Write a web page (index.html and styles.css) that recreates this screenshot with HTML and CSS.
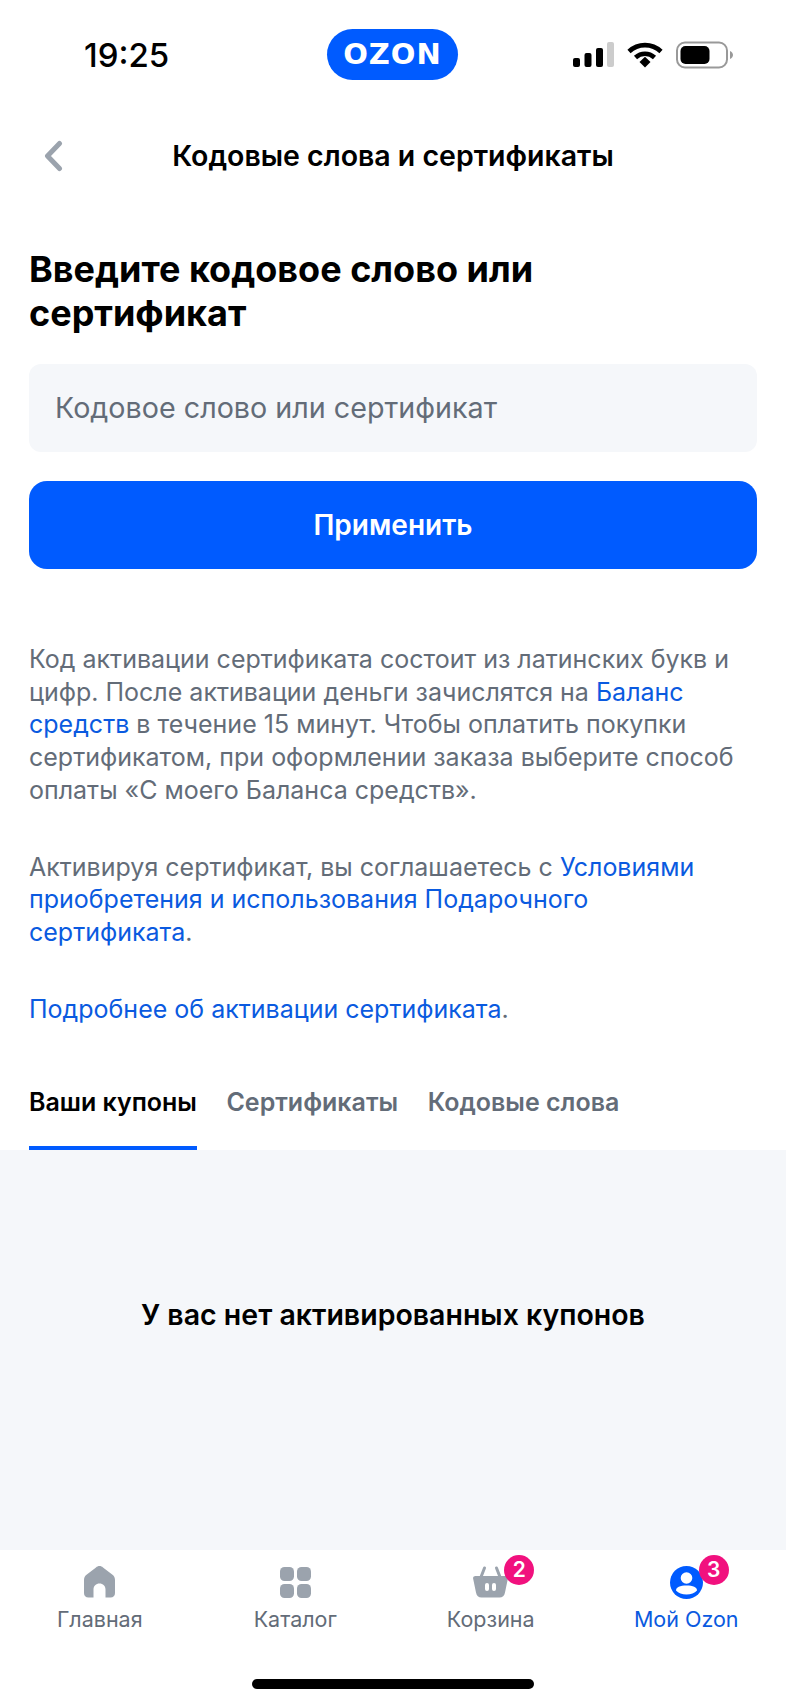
FILE: index.html
```html
<!DOCTYPE html>
<html lang="ru">
<head>
  <meta charset="utf-8">
  <title>Кодовые слова и сертификаты</title>
  <link rel="stylesheet" href="styles.css">
</head>
<body>
  <div class="screen">
    <!-- Status bar -->
    <div class="status">
      <span class="time">19:25</span>
      <span class="logo">OZON</span>
      <div class="status-icons">
        <svg class="signal" width="41" height="26" viewBox="0 0 41 26">
          <rect x="0" y="16" width="7" height="9" rx="2" fill="#000"/>
          <rect x="11.500" y="11" width="7" height="14" rx="2" fill="#000"/>
          <rect x="23" y="6" width="7" height="19" rx="2" fill="#000"/>
          <rect x="34" y="0" width="7" height="25" rx="2" fill="#ccc"/>
        </svg>
        <svg class="wifi" width="36" height="26" viewBox="0 0 36 26">
          <path d="M2 9.500C11 1 25 1 34 9.500" fill="none" stroke="#000" stroke-width="4.600"/>
          <path d="M8.500 15.500C14 10.500 22 10.500 27.500 15.500" fill="none" stroke="#000" stroke-width="4.600"/>
          <path d="M12.500 20L18 14.800L23.500 20L18 25.500Z" fill="#000"/>
        </svg>
        <svg class="battery" width="58" height="28" viewBox="0 0 58 28">
          <rect x="1" y="1.500" width="50" height="25" rx="8" fill="none" stroke="#999" stroke-width="2"/>
          <rect x="4.500" y="5" width="29" height="18" rx="5" fill="#000"/>
          <path d="M54 10C56 11 57 12.500 57 14C57 15.500 56 17 54 18Z" fill="#999"/>
        </svg>
      </div>
    </div>

    <!-- Title -->
    <div class="nav">
      <svg class="back" width="22" height="32" viewBox="0 0 22 32">
        <path d="M17.500 3.500L5.500 16L17.500 28.500" fill="none" stroke="#9ba3ad" stroke-width="5" stroke-linecap="round" stroke-linejoin="round"/>
      </svg>
      <span class="nav-title">Кодовые слова и сертификаты</span>
    </div>

    <div class="content">
      <h1>Введите кодовое слово или сертификат</h1>
      <div class="field">Кодовое слово или сертификат</div>
      <button class="apply">Применить</button>

      <p class="first">Код активации сертификата состоит из латинских букв и цифр. После активации деньги зачислятся на <a>Баланс средств</a> в течение 15 минут. Чтобы оплатить покупки сертификатом, при оформлении заказа выберите способ оплаты «С моего Баланса средств».</p>
      <p>Активируя сертификат, вы соглашаетесь с <a>Условиями приобретения и использования Подарочного сертификата</a>.</p>
      <p><a>Подробнее об активации сертификата</a>.</p>
    </div>

    <div class="tabs">
      <span class="tab active">Ваши купоны</span>
      <span class="tab">Сертификаты</span>
      <span class="tab">Кодовые слова</span>
    </div>

    <div class="panel">У вас нет активированных купонов</div>

    <!-- Bottom navigation -->
    <div class="tabbar">
      <div class="tabbar-items">
        <div class="item">
          <svg width="31" height="33" viewBox="0 0 31 33">
            <path d="M15.500 0C16.800 0 18 .600 19 1.400L28.500 8.800C30.200 10.200 31 11.800 31 14V27C31 29.800 29.300 31.500 26.500 31.500H21.500V23.500C21.500 20 19 17.500 15.500 17.500C12 17.500 9.500 20 9.500 23.500V31.500H4.500C1.700 31.500 0 29.800 0 27V14C0 11.800 .800 10.200 2.500 8.800L12 1.400C13 .600 14.200 0 15.500 0Z" fill="#9ba3ad"/>
          </svg>
          <span>Главная</span>
        </div>
        <div class="item">
          <svg width="31" height="33" viewBox="0 0 31 33">
            <rect x="0" y="1" width="14" height="14" rx="4.500" fill="#9ba3ad"/>
            <rect x="17" y="1" width="14" height="14" rx="4.500" fill="#9ba3ad"/>
            <rect x="0" y="18" width="14" height="14" rx="4.500" fill="#9ba3ad"/>
            <rect x="17" y="18" width="14" height="14" rx="4.500" fill="#9ba3ad"/>
          </svg>
          <span>Каталог</span>
        </div>
        <div class="item">
          <div class="icon-wrap">
            <svg width="35" height="33" viewBox="0 0 35 33">
              <path d="M8 11L11.500 2M27 11L23.500 2" fill="none" stroke="#9ba3ad" stroke-width="3" stroke-linecap="round"/>
              <path d="M2.500 10H32.500C34 10 35.200 11 34.900 12.500L32 26.500C31.400 29.700 29.500 31.500 26.500 31.500H8.500C5.500 31.500 3.600 29.700 3 26.500L.100 12.500C-.200 11 1 10 2.500 10Z" fill="#9ba3ad"/>
              <rect x="12" y="17" width="4" height="8" rx="2" fill="#fff"/>
              <rect x="19" y="17" width="4" height="8" rx="2" fill="#fff"/>
            </svg>
            <span class="badge badge-cart">2</span>
          </div>
          <span>Корзина</span>
        </div>
        <div class="item current">
          <div class="icon-wrap">
            <svg width="33" height="33" viewBox="0 0 33 33">
              <circle cx="16.500" cy="16.500" r="16.500" fill="#005bff"/>
              <circle cx="16.500" cy="12" r="5.800" fill="#fff"/>
              <path d="M6 24.500C6 21 10 19.500 16.500 19.500C23 19.500 27 21 27 24.500C24.500 27.300 21 28.500 16.500 28.500C12 28.500 8.500 27.300 6 24.500Z" fill="#fff"/>
            </svg>
            <span class="badge badge-user">3</span>
          </div>
          <span>Мой Ozon</span>
        </div>
      </div>
      <div class="home-bar"></div>
    </div>
  </div>
</body>
</html>
```

FILE: styles.css
```css
* {
  box-sizing: border-box;
}
body {
  margin: 0;
  background-color: #fff;
  font-family: Inter, "Noto Sans", sans-serif;
  color: #000;
}
.screen {
  width: 786px;
  height: 1704px;
  display: flex;
  flex-direction: column;
  overflow: hidden;
}

.status {
  height: 110px;
  padding: 29px 52px 30px 84px;
  display: flex;
  align-items: center;
}
.time {
  width: 243px;
  font-size: 33px;
  font-weight: 500;
}
.logo {
  width: 131px;
  height: 51px;
  border-radius: 26px;
  background-color: #005bff;
  color: #fff;
  font-family: "DejaVu Sans", sans-serif;
  font-size: 29px;
  font-weight: 700;
  letter-spacing: 1px;
  line-height: 51px;
  text-align: center;
}
.status-icons {
  margin-left: auto;
  display: flex;
  align-items: center;
  gap: 13px;
}

.nav {
  height: 90px;
  position: relative;
  display: flex;
  align-items: center;
  justify-content: center;
}
.back {
  position: absolute;
  left: 42px;
  top: 30px;
}
.nav-title {
  font-size: 28.500px;
  font-weight: 600;
}

.content {
  padding: 47px 29px 0;
}
h1 {
  max-width: 600px;
  margin: 0 0 29px;
  font-size: 36px;
  font-weight: 700;
  line-height: 44px;
}
.field {
  height: 88px;
  padding: 0 26px;
  border-radius: 12px;
  background-color: #f5f7fa;
  color: #636c78;
  font-size: 28.700px;
  line-height: 88px;
}
.apply {
  display: block;
  width: 100%;
  height: 88px;
  margin-top: 29px;
  border: none;
  border-radius: 18px;
  background-color: #005bff;
  color: #fff;
  font-family: inherit;
  font-size: 28px;
  font-weight: 600;
}
p {
  margin: 44px 0 0;
  color: #636c78;
  font-size: 25px;
  line-height: 32.700px;
}
p.first {
  margin-top: 74px;
}
p a {
  color: #0a5ae0;
}

.tabs {
  margin-top: 59px;
  padding: 0 29px;
  display: flex;
  gap: 29.500px;
}
.tab {
  height: 66px;
  color: #636c78;
  font-size: 25px;
  font-weight: 600;
  line-height: 36px;
}
.tab.active {
  color: #000;
  border-bottom: 4px solid #005bff;
}

.panel {
  height: 400px;
  padding-top: 147px;
  background-color: #f5f7fa;
  font-size: 28.500px;
  font-weight: 600;
  line-height: 36px;
  text-align: center;
}

.tabbar {
  flex: 1;
  display: flex;
  flex-direction: column;
  align-items: center;
}
.tabbar-items {
  width: 100%;
  padding: 16px 2px 0;
  display: grid;
  grid-template-columns: repeat(4, 1fr);
}
.item {
  display: flex;
  flex-direction: column;
  align-items: center;
  gap: 6px;
  color: #636c78;
  font-size: 21.500px;
  line-height: 28px;
}
.item.current {
  color: #0a5ae0;
}
.item svg {
  display: block;
}
.icon-wrap {
  position: relative;
}
.badge {
  position: absolute;
  top: -11px;
  width: 30px;
  height: 30px;
  border-radius: 50%;
  background-color: #f1117e;
  color: #fff;
  font-size: 21px;
  font-weight: 600;
  line-height: 30px;
  text-align: center;
}
.badge-cart {
  left: 31px;
}
.badge-user {
  left: 29px;
}
.home-bar {
  width: 282px;
  height: 10px;
  margin-top: 46px;
  border-radius: 5px;
  background-color: #000;
}
```
